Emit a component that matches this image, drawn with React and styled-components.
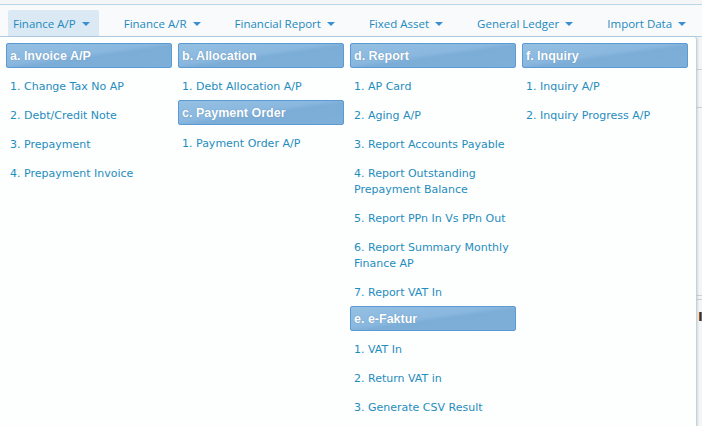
import React from "react";
import styled, { createGlobalStyle } from "styled-components";

const GlobalStyle = createGlobalStyle`
  html, body {
    margin: 0;
    padding: 0;
    background: #f4f6f8;
  }
  body {
    font-family: "DejaVu Sans", Verdana, sans-serif;
  }
`;

const menus = [
  "Finance A/P",
  "Finance A/R",
  "Financial Report",
  "Fixed Asset",
  "General Ledger",
  "Import Data",
];

const columns = [
  [
    {
      title: "a. Invoice A/P",
      items: [
        "1. Change Tax No AP",
        "2. Debt/Credit Note",
        "3. Prepayment",
        "4. Prepayment Invoice",
      ],
    },
  ],
  [
    { title: "b. Allocation", items: ["1. Debt Allocation A/P"] },
    { title: "c. Payment Order", items: ["1. Payment Order A/P"] },
  ],
  [
    {
      title: "d. Report",
      items: [
        "1. AP Card",
        "2. Aging A/P",
        "3. Report Accounts Payable",
        "4. Report Outstanding Prepayment Balance",
        "5. Report PPn In Vs PPn Out",
        "6. Report Summary Monthly Finance AP",
        "7. Report VAT In",
      ],
    },
    {
      title: "e. e-Faktur",
      items: ["1. VAT In", "2. Return VAT in", "3. Generate CSV Result"],
    },
  ],
  [
    {
      title: "f. Inquiry",
      items: ["1. Inquiry A/P", "2. Inquiry Progress A/P"],
    },
  ],
];

const Caret = () => (
  <CaretIcon viewBox="0 0 8 4" width="8" height="4">
    <path d="M0 0 L8 0 L4 4 Z" fill="currentColor" />
  </CaretIcon>
);

const App = () => {
  return (
    <>
      <GlobalStyle />
      <Page>
        <TopBar>
          <Nav>
            {menus.map((m, i) => (
              <NavItem key={m} active={i === 0}>
                {m}
                <Caret />
              </NavItem>
            ))}
          </Nav>
        </TopBar>
        <Content>
          <Row offset={32} />
          <Row offset={37} />
          <Row offset={187} />
          <Row offset={3} />
          <Marker>I</Marker>

          <Dropdown>
            {columns.map((col, ci) => (
              <Column key={ci}>
                {col.map((group) => (
                  <Group key={group.title}>
                    <GroupTitle>{group.title}</GroupTitle>
                    {group.items.map((item) => (
                      <MenuLink key={item}>{item}</MenuLink>
                    ))}
                  </Group>
                ))}
              </Column>
            ))}
          </Dropdown>
        </Content>
      </Page>
    </>
  );
};

export default App;

const Page = styled.div`
  width: 702px;
  height: 426px;
  overflow: hidden;
  padding-top: 4px;
  box-sizing: border-box;
`;

const TopBar = styled.div`
  border-top: 1px solid #b9d5ea;
  border-bottom: 1px solid #b3d0e8;
  background: #f8fafb;
  height: 33px;
  box-sizing: border-box;
  padding-top: 5px;
`;

const Nav = styled.div`
  display: flex;
  gap: 20px;
  padding-left: 8px;
`;

const NavItem = styled.div`
  display: flex;
  align-items: center;
  height: 26px;
  box-sizing: border-box;
  padding: 0 9px 0 5px;
  font-family: "Open Sans", sans-serif;
  font-size: 11.5px;
  color: #2389bd;
  background: ${(p) => (p.active ? "#dbe9f5" : "transparent")};
  border-radius: 2px 2px 0 0;
  white-space: nowrap;
`;

const CaretIcon = styled.svg`
  margin-left: 6px;
  margin-top: 1px;
  color: #3a8fd0;
`;

const Content = styled.div`
  position: relative;
  height: 388px;
  background: #f3f5f7;
`;

const Row = styled.div`
  height: ${(p) => p.offset}px;
  border-bottom: 1px solid #c9d2da;
`;

const Marker = styled.div`
  position: absolute;
  left: 698px;
  top: 272px;
  font-family: "DejaVu Sans", sans-serif;
  font-size: 13px;
  font-weight: bold;
  color: #4a3018;
`;

const Dropdown = styled.div`
  position: absolute;
  top: 0;
  left: 0;
  width: 697px;
  height: 420px;
  box-sizing: border-box;
  background: #fdfefe;
  border-right: 1px solid #c5d3de;
  border-radius: 0 3px 0 0;
  box-shadow: 1px 0 2px rgba(0, 0, 0, 0.12);
  display: flex;
  gap: 6px;
  padding: 6px 0 0 6px;
`;

const Column = styled.div`
  width: 166px;
  display: flex;
  flex-direction: column;
`;

const Group = styled.div`
  display: flex;
  flex-direction: column;
  & + & {
    margin-top: 1px;
  }
`;

const GroupTitle = styled.div`
  height: 25px;
  box-sizing: border-box;
  border: 1px solid #5b9ad2;
  border-radius: 2px;
  padding: 0 3px;
  display: flex;
  align-items: center;
  font-family: "Liberation Sans", Arial, sans-serif;
  font-weight: bold;
  font-size: 12.5px;
  color: #ffffff;
  text-shadow: 0 0 1px rgba(40, 90, 140, 0.5);
  background: linear-gradient(
    172deg,
    #95c0e3 0%,
    #89b7de 45%,
    #7badd7 55%,
    #7eafd8 100%
  );
  margin-bottom: 2px;
`;

const MenuLink = styled.div`
  padding: 9px 4px 4px;
  font-size: 11px;
  line-height: 16px;
  color: #1f8dbd;
  cursor: pointer;
`;
